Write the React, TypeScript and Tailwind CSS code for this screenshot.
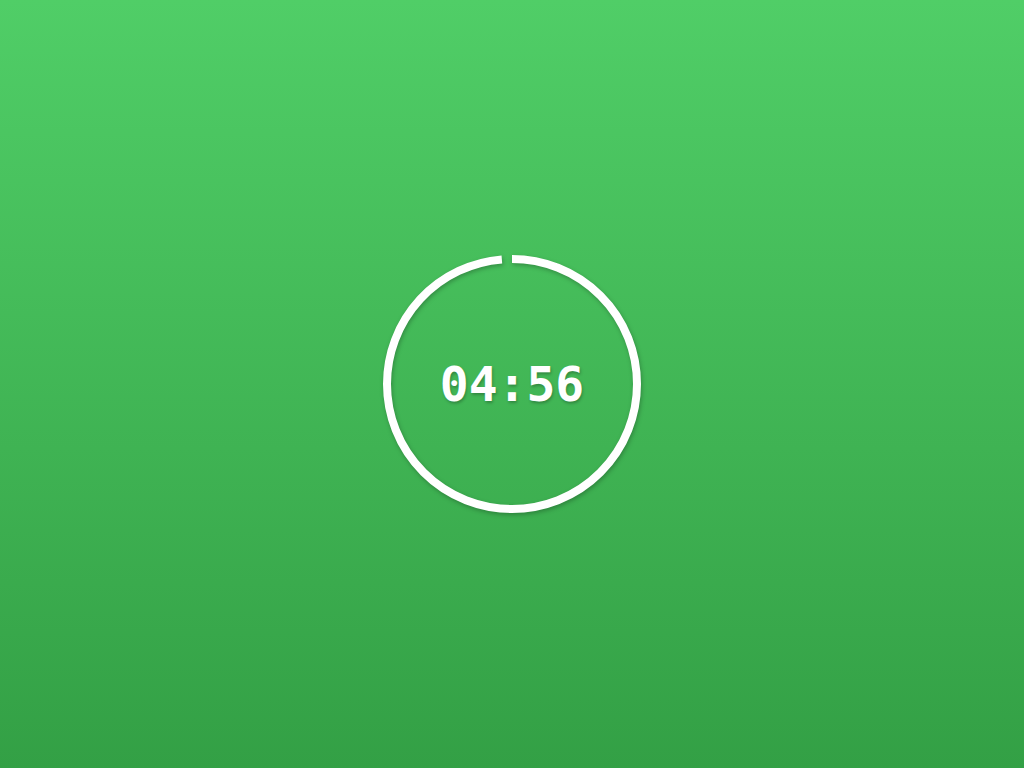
import React from "react";

export default function App() {
  const r = 125;
  const c = 2 * Math.PI * r;
  const progress = 296 / 300;
  return (
    <div className="w-[1024px] h-[768px] bg-gradient-to-b from-[#50ce67] to-[#33a045] flex items-center justify-center">
      <div className="relative w-[260px] h-[260px] flex items-center justify-center">
        <svg
          width="260"
          height="260"
          viewBox="0 0 260 260"
          className="absolute inset-0 drop-shadow-[1px_2px_2px_rgba(0,0,0,0.25)]"
        >
          <circle
            cx="130"
            cy="130"
            r={r}
            fill="none"
            stroke="#ffffff"
            strokeWidth="8"
            strokeDasharray={`${c * progress} ${c}`}
            transform="rotate(-90 130 130)"
          />
        </svg>
        <span
          className="relative text-white font-bold text-[48px] leading-none [text-shadow:1px_2px_3px_rgba(0,0,0,0.25)]"
          style={{ fontFamily: '"DejaVu Sans Mono", monospace' }}
        >
          04:56
        </span>
      </div>
    </div>
  );
}
